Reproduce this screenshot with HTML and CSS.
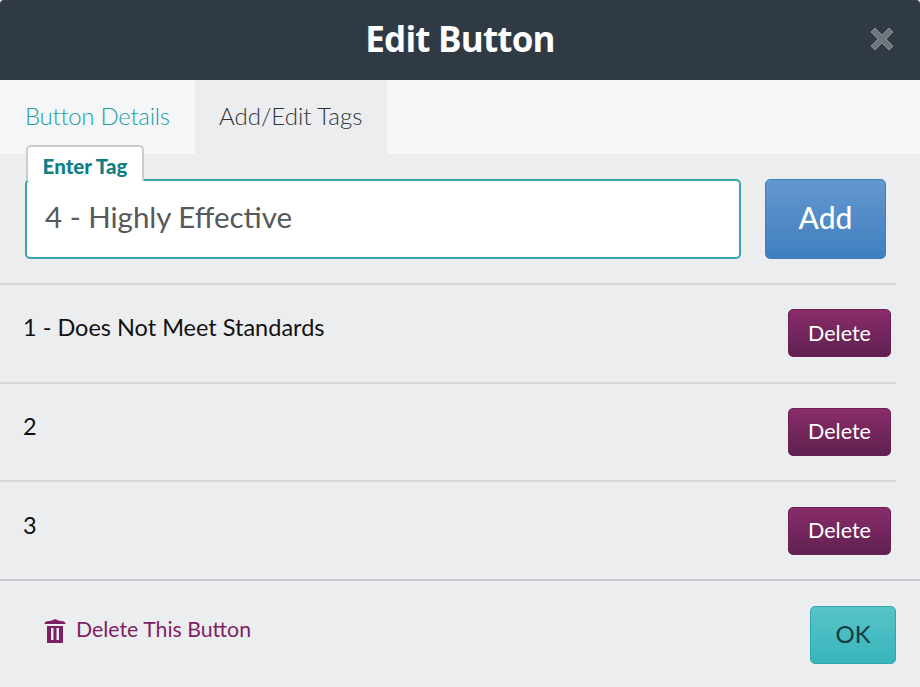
FILE: index.html
```html
<!DOCTYPE html>
<html>
<head>
    <title>Edit Button</title>
    <link rel="stylesheet" href="styles.css">
</head>
<body>
    <div class="modal">
        <header class="modal-head">
            <h1>Edit Button</h1>
            <svg class="close" viewBox="0 0 24 24" width="24" height="24">
                <path d="M1 5 L5 1 L12 8 L19 1 L23 5 L16 12 L23 19 L19 23 L12 16 L5 23 L1 19 L8 12 Z" fill="#6d767d" stroke="#8a9197" stroke-width="1"/>
            </svg>
        </header>
        <nav class="tabs">
            <a class="tab tab-link">Button Details</a>
            <a class="tab tab-active">Add/Edit Tags</a>
        </nav>
        <section class="add-row">
            <div class="field">
                <label class="field-label">Enter Tag</label>
                <div class="field-input">4 - Highly Effective</div>
            </div>
            <button class="btn-add">Add</button>
        </section>
        <ul class="tag-list">
            <li class="tag-row"><span>1 - Does Not Meet Standards</span><button class="btn-delete">Delete</button></li>
            <li class="tag-row"><span>2</span><button class="btn-delete">Delete</button></li>
            <li class="tag-row"><span>3</span><button class="btn-delete">Delete</button></li>
        </ul>
        <footer class="modal-foot">
            <a class="delete-link">
                <svg viewBox="0 0 22 25" width="22" height="25">
                    <path d="M8 2.5 Q11 0 14 2.5 L20 3.5 Q21.500 4 21.500 6 L0.500 6 Q0.500 4 2 3.500 Z" fill="#7f1f63"/>
                    <path d="M3 8 H19 V25 H3 Z M7 10 V22 H9.500 V10 Z M12.500 10 V22 H15 V10 Z" fill="#7f1f63" fill-rule="evenodd"/>
                </svg>
                Delete This Button
            </a>
            <button class="btn-ok">OK</button>
        </footer>
    </div>
</body>
</html>
```

FILE: styles.css
```css
* {
    margin: 0;
    padding: 0;
    box-sizing: border-box;
}

body {
    width: 920px;
    height: 687px;
    overflow: hidden;
    background: #ecedef;
    font-family: "Lato", "Liberation Sans", sans-serif;
}

.modal {
    height: 687px;
    display: flex;
    flex-direction: column;
}

.modal-head {
    height: 80px;
    background: #303a44;
    display: flex;
    align-items: center;
    justify-content: center;
    position: relative;
    border-radius: 4px 4px 0 0;
}

.modal-head h1 {
    color: #fff;
    font-family: "Open Sans", sans-serif;
    font-size: 35px;
    font-weight: 700;
    letter-spacing: -0.8px;
    margin-top: -4px;
}

.close {
    position: absolute;
    right: 26px;
    top: 27px;
}

.tabs {
    height: 74px;
    background: #f5f6f8;
    display: flex;
}

.tab {
    font-size: 24px;
    font-weight: 300;
    line-height: 72px;
}

.tab-link {
    width: 195px;
    padding-left: 25px;
    color: #1f9da3;
    letter-spacing: -0.3px;
}

.tab-active {
    width: 192px;
    padding-left: 24px;
    background: #ecedef;
    color: #2f3439;
}

.add-row {
    display: flex;
    gap: 24px;
    padding: 25px 34px 0 25px;
}

.field {
    position: relative;
    flex: 1;
}

.field-input {
    height: 80px;
    background: #fff;
    border: 2px solid #35a5ab;
    border-radius: 5px;
    padding-left: 18px;
    font-size: 29.500px;
    line-height: 72px;
    color: #55595c;
}

.field-label {
    position: absolute;
    left: 1px;
    top: -34px;
    width: 118px;
    height: 36px;
    background: #fff;
    border: 2px solid #c9cbcd;
    border-bottom: 0;
    border-radius: 5px 5px 0 0;
    text-align: center;
    font-size: 20.500px;
    font-weight: 900;
    line-height: 38px;
    color: #0f7f85;
}

.btn-add {
    width: 121px;
    height: 80px;
    padding-bottom: 4px;
    background: linear-gradient(#6497cf, #3f7fbf);
    border: 1px solid #3f7fc0;
    border-radius: 5px;
    color: #fff;
    font-family: inherit;
    font-size: 30px;
    font-weight: 500;
}

.tag-list {
    list-style: none;
    height: 295.500px;
    margin: 24px 24px 0 0;
}

.tag-row {
    height: 98.700px;
    border-top: 2px solid #d6d7d9;
    display: flex;
    justify-content: space-between;
    align-items: flex-start;
    padding: 24.200px 5px 0 23px;
    font-size: 23.500px;
    line-height: 36px;
    color: #111;
}

.btn-delete {
    width: 103px;
    height: 48px;
    padding-bottom: 1px;
    background: linear-gradient(#8a2c68, #5f2150);
    border: 1px solid #6a1f55;
    border-radius: 5px;
    color: #fff;
    font-family: inherit;
    font-size: 21.500px;
    font-weight: 400;
}

.modal-foot {
    flex: 1;
    border-top: 2px solid #c8cacd;
    display: flex;
    justify-content: space-between;
    align-items: flex-start;
    padding: 25px 24px 0 44px;
}

.delete-link {
    display: flex;
    align-items: flex-start;
    gap: 10px;
    margin-top: 10px;
    font-size: 21.300px;
    line-height: 26px;
    color: #7f1f63;
}

.delete-link svg {
    margin-top: 2px;
}

.btn-ok {
    width: 86px;
    height: 58px;
    padding-bottom: 3px;
    background: linear-gradient(#57c4ca, #38b5bb);
    border: 1px solid #2fa7ad;
    border-radius: 5px;
    font-family: inherit;
    font-size: 24px;
    color: #123c44;
}
```
